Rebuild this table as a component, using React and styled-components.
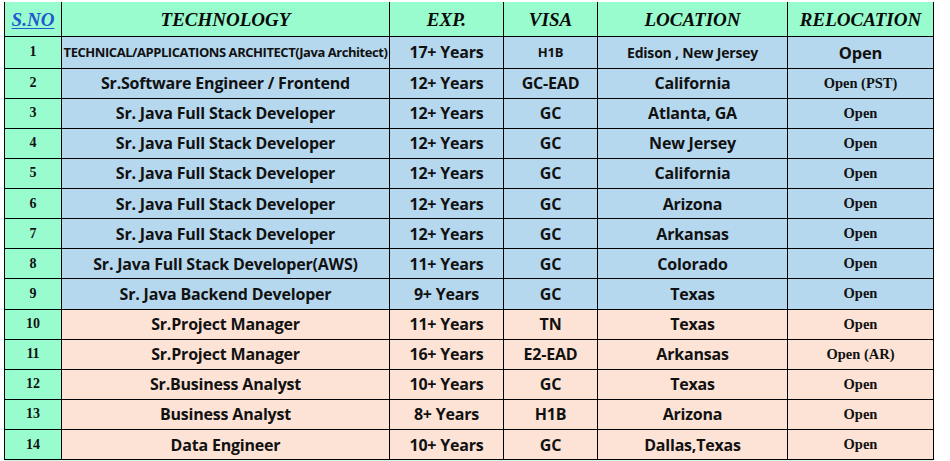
import React from "react";
import styled, { createGlobalStyle } from "styled-components";

const GlobalStyle = createGlobalStyle`
  html, body {
    margin: 0;
    padding: 0;
    background: #ffffff;
  }
`;

const rows = [
  { no: 1, tech: "TECHNICAL/APPLICATIONS ARCHITECT(Java Architect)", exp: "17+ Years", visa: "H1B", loc: "Edison , New Jersey", reloc: "Open", small: true },
  { no: 2, tech: "Sr.Software Engineer / Frontend", exp: "12+ Years", visa: "GC-EAD", loc: "California", reloc: "Open (PST)" },
  { no: 3, tech: "Sr. Java Full Stack Developer", exp: "12+ Years", visa: "GC", loc: "Atlanta, GA", reloc: "Open" },
  { no: 4, tech: "Sr. Java Full Stack Developer", exp: "12+ Years", visa: "GC", loc: "New Jersey", reloc: "Open" },
  { no: 5, tech: "Sr. Java Full Stack Developer", exp: "12+ Years", visa: "GC", loc: "California", reloc: "Open" },
  { no: 6, tech: "Sr. Java Full Stack Developer", exp: "12+ Years", visa: "GC", loc: "Arizona", reloc: "Open" },
  { no: 7, tech: "Sr. Java Full Stack Developer", exp: "12+ Years", visa: "GC", loc: "Arkansas", reloc: "Open" },
  { no: 8, tech: "Sr. Java Full Stack Developer(AWS)", exp: "11+ Years", visa: "GC", loc: "Colorado", reloc: "Open" },
  { no: 9, tech: "Sr. Java Backend Developer", exp: "9+ Years", visa: "GC", loc: "Texas", reloc: "Open" },
  { no: 10, tech: "Sr.Project Manager", exp: "11+ Years", visa: "TN", loc: "Texas", reloc: "Open", peach: true },
  { no: 11, tech: "Sr.Project Manager", exp: "16+ Years", visa: "E2-EAD", loc: "Arkansas", reloc: "Open (AR)", peach: true },
  { no: 12, tech: "Sr.Business Analyst", exp: "10+ Years", visa: "GC", loc: "Texas", reloc: "Open", peach: true },
  { no: 13, tech: "Business Analyst", exp: "8+ Years", visa: "H1B", loc: "Arizona", reloc: "Open", peach: true },
  { no: 14, tech: "Data Engineer", exp: "10+ Years", visa: "GC", loc: "Dallas,Texas", reloc: "Open", peach: true },
];

const App = () => {
  return (
    <Wrapper>
      <GlobalStyle />
      <Table>
        <colgroup>
          <col style={{ width: 57 }} />
          <col style={{ width: 328 }} />
          <col style={{ width: 114 }} />
          <col style={{ width: 94 }} />
          <col style={{ width: 190 }} />
          <col style={{ width: 146 }} />
        </colgroup>
        <thead>
          <tr>
            <HeadCell>
              <SnoLink href="#">S.NO</SnoLink>
            </HeadCell>
            <HeadCell>TECHNOLOGY</HeadCell>
            <HeadCell>EXP.</HeadCell>
            <HeadCell>VISA</HeadCell>
            <HeadCell>LOCATION</HeadCell>
            <HeadCell>RELOCATION</HeadCell>
          </tr>
        </thead>
        <tbody>
          {rows.map((r) => (
            <Row key={r.no} $peach={r.peach} $tall={r.small}>
              <NoCell>{r.no}</NoCell>
              <Cell $size={r.small ? 13 : 16} $spacing={r.small ? -0.45 : -0.2}>
                {r.tech}
              </Cell>
              <Cell $size={16}>{r.exp}</Cell>
              <Cell $size={r.small ? 13 : 16}>{r.visa}</Cell>
              <Cell $size={r.small ? 14 : 16}>{r.loc}</Cell>
              {r.small ? (
                <Cell $size={16.5}>{r.reloc}</Cell>
              ) : (
                <SerifCell>{r.reloc}</SerifCell>
              )}
            </Row>
          ))}
        </tbody>
      </Table>
      <TailStrip />
    </Wrapper>
  );
};

const Wrapper = styled.div`
  padding: 2px 0 0 4px;
  width: 930px;
  overflow: hidden;
`;

const Table = styled.table`
  border-collapse: collapse;
  table-layout: fixed;
  width: 929px;
  border-left: 1px solid #000;
  border-right: 1px solid #000;
`;

const HeadCell = styled.th`
  height: 33px;
  padding: 1px 0 0;
  background: #99fccf;
  border-left: 1px solid #000;
  border-bottom: 1px solid #000;
  font-family: "Liberation Serif", "Times New Roman", serif;
  font-style: italic;
  font-weight: bold;
  font-size: 19px;
  color: #0a0a0a;
  text-align: center;
  vertical-align: middle;
`;

const SnoLink = styled.a`
  color: #2157cf;
  text-decoration: underline;
  text-decoration-thickness: 1px;
  text-underline-offset: 2px;
`;

const Row = styled.tr`
  background: ${(p) => (p.$peach ? "#fde3d5" : "#b6d8ee")};
  height: ${(p) => (p.$tall ? "31.5px" : "30.14px")};
`;

const NoCell = styled.td`
  padding: 0;
  background: #99fccf;
  border: 1px solid #000;
  font-family: "Liberation Serif", "Times New Roman", serif;
  font-weight: bold;
  font-size: 14px;
  color: #111;
  text-align: center;
  vertical-align: middle;
`;

const Cell = styled.td`
  padding: 0;
  border: 1px solid #000;
  font-family: "Open Sans", "Noto Sans", sans-serif;
  font-weight: bold;
  font-size: ${(p) => p.$size}px;
  letter-spacing: ${(p) => p.$spacing ?? -0.2}px;
  color: #111;
  text-align: center;
  vertical-align: middle;
  white-space: nowrap;
  overflow: hidden;
`;

const SerifCell = styled.td`
  padding: 0;
  border: 1px solid #000;
  font-family: "Liberation Serif", "Times New Roman", serif;
  font-weight: bold;
  font-size: 14.5px;
  color: #111;
  text-align: center;
  vertical-align: middle;
`;

const TailStrip = styled.div`
  width: 929px;
  height: 4px;
  background: #cdf6e4;
`;

export default App;
